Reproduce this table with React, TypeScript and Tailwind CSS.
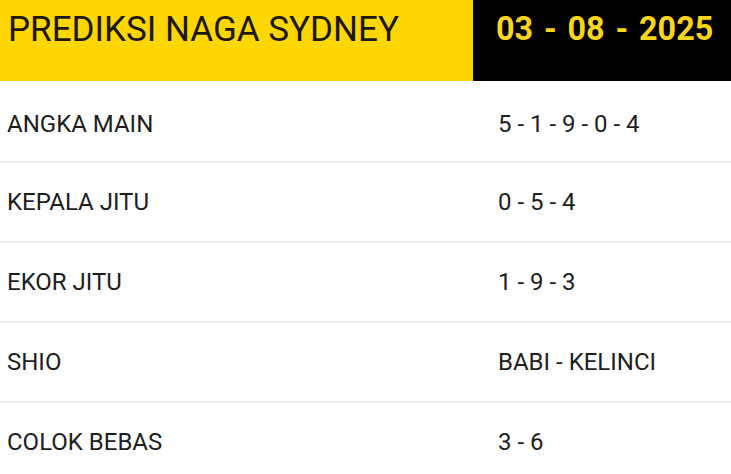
import React from "react";

const rows = [
  ["ANGKA MAIN", "5 - 1 - 9 - 0 - 4"],
  ["KEPALA JITU", "0 - 5 - 4"],
  ["EKOR JITU", "1 - 9 - 3"],
  ["SHIO", "BABI - KELINCI"],
  ["COLOK BEBAS", "3 - 6"],
];

export default function App() {
  return (
    <div className="w-[731px] h-[474px] overflow-hidden bg-white font-['Roboto',sans-serif] text-[#1e1e1e]">
      <div className="flex h-[81px]">
        <div className="w-[473px] bg-[#fed700] pl-[8px] pt-[9px]">
          <span className="text-[35px] leading-[41px] text-[#1d1710] whitespace-nowrap">PREDIKSI NAGA SYDNEY</span>
        </div>
        <div className="flex-1 bg-black pl-[23px] pt-[8px] overflow-hidden">
          <span className="inline-block origin-left scale-x-[0.95] whitespace-nowrap text-[34px] leading-[41px] font-bold text-[#fad51a] [word-spacing:3px]">
            03 - 08 - 2025
          </span>
        </div>
      </div>
      {rows.map(([label, value], i) => (
        <div
          key={label}
          className={
            i === 0
              ? "flex h-[80px] items-center pt-[5px] text-[24px]"
              : "flex h-[80px] items-center border-t-2 border-[#eeeeee] text-[24px]"
          }
        >
          <div className="w-[498px] pl-[7px]">{label}</div>
          <div className="flex-1">{value}</div>
        </div>
      ))}
    </div>
  );
}
